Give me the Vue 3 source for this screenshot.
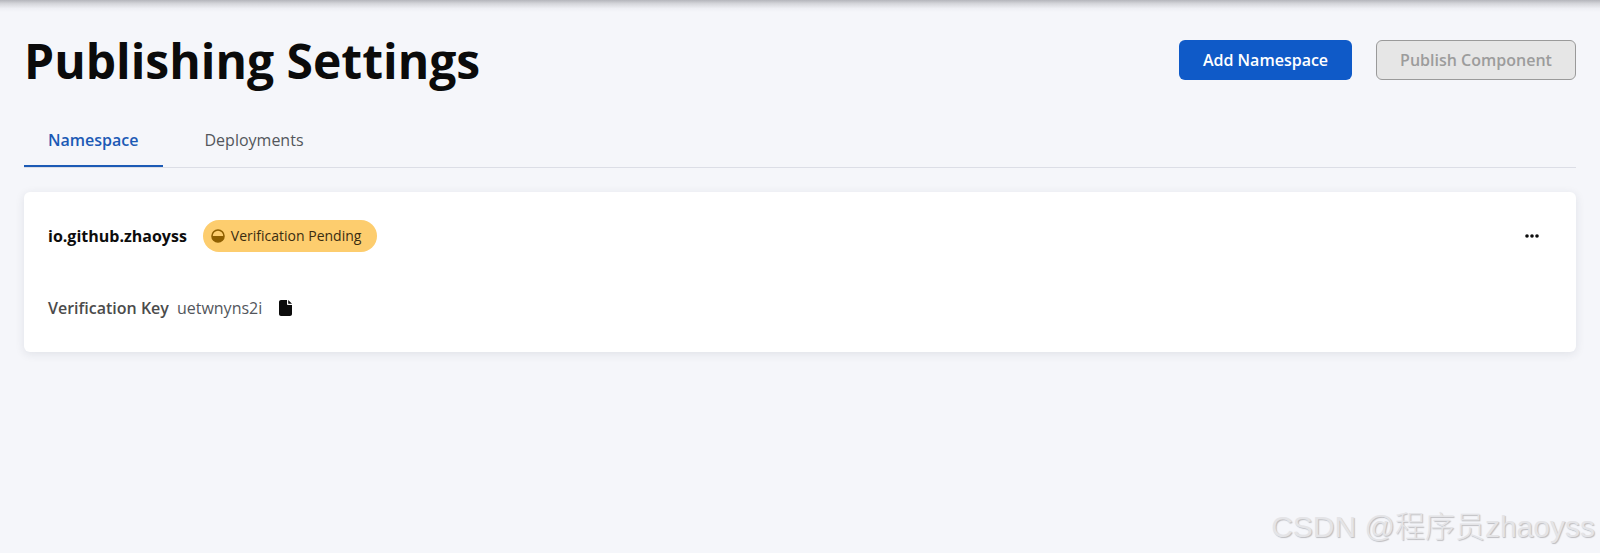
<script setup>
const tabs = [
  { label: 'Namespace', active: true },
  { label: 'Deployments', active: false },
]
</script>

<template>
  <div class="page">
    <div class="topshade"></div>
    <main class="content">
      <header class="head">
        <h1 class="title">Publishing Settings</h1>
        <div class="actions">
          <button class="btn primary">Add Namespace</button>
          <button class="btn disabled">Publish Component</button>
        </div>
      </header>
      <nav class="tabs">
        <div v-for="t in tabs" :key="t.label" class="tab" :class="{ active: t.active }">{{ t.label }}</div>
      </nav>
      <section class="card">
        <div class="row-top">
          <div class="row-left">
            <span class="name">io.github.zhaoyss</span>
            <span class="badge">
              <svg class="half" width="14" height="14" viewBox="0 0 14 14">
                <circle cx="7" cy="7" r="6" fill="none" stroke="#8f5f00" stroke-width="1.6" />
                <path d="M1 7h12a6 6 0 0 1-12 0z" fill="#8f5f00" />
              </svg>
              <span class="badge-text">Verification Pending</span>
            </span>
          </div>
          <svg class="more" width="14" height="4" viewBox="0 0 14 4">
            <circle cx="2" cy="2" r="1.8" fill="#0c0c0c" />
            <circle cx="7" cy="2" r="1.8" fill="#0c0c0c" />
            <circle cx="12" cy="2" r="1.8" fill="#0c0c0c" />
          </svg>
        </div>
        <div class="row-key">
          <span class="key-label">Verification Key</span>
          <span class="key-value">uetwnyns2i</span>
          <svg class="copy" width="13" height="16" viewBox="0 0 13 16">
            <path d="M2 0h6v4.2c0 .5.4.8.8.8H13v9c0 1.1-.9 2-2 2H2c-1.1 0-2-.9-2-2V2C0 .9.9 0 2 0zM9.2 0 13 3.8H9.2z" fill="#0c0c0c" />
          </svg>
        </div>
      </section>
    </main>
    <div class="watermark">CSDN @程序员zhaoyss</div>
  </div>
</template>

<style>
html, body { margin: 0; background: #f5f6fa; }
</style>

<style scoped>
.page {
  position: relative;
  height: 553px;
  overflow: hidden;
  background: #f5f6fa;
  font-family: "Open Sans", "Noto Sans", sans-serif;
}
.topshade {
  position: absolute;
  left: 0;
  right: 0;
  top: 0;
  height: 12px;
  background: linear-gradient(to bottom, #b4b5bb 0, #d4d5da 30%, #eeeff4 70%, #f5f6fa 100%);
}
.content {
  padding: 31px 24px 0;
}
.head {
  display: flex;
  justify-content: space-between;
  align-items: flex-start;
}
.title {
  margin: 0;
  font-size: 48px;
  line-height: 60px;
  font-weight: 700;
  color: #0b0b0b;
}
.actions {
  display: flex;
  gap: 24px;
  padding-top: 9px;
}
.btn {
  height: 40px;
  border-radius: 6px;
  font-family: inherit;
  font-size: 16px;
  font-weight: 600;
  box-sizing: border-box;
  padding: 0;
}
.primary {
  width: 173px;
  background: #0f5ac8;
  border: none;
  color: #fff;
}
.disabled {
  width: 200px;
  background: #e6e6e6;
  border: 1px solid #9a9a9a;
  color: #9c9c9c;
}
.tabs {
  display: flex;
  margin-top: 16px;
  border-bottom: 1px solid #dcdee6;
  height: 60px;
}
.tab {
  padding: 3px 24px 0;
  font-size: 16px;
  line-height: 60px;
  color: #53565c;
  height: 60px;
  box-sizing: border-box;
  margin-right: 18px;
}
.tab.active {
  color: #1c5ab5;
  font-weight: 600;
  border-bottom: 2px solid #1c5ab5;
}
.card {
  margin-top: 24px;
  height: 160px;
  box-sizing: border-box;
  background: #fff;
  border-radius: 6px;
  box-shadow: 0 2px 10px rgba(40, 45, 70, 0.1);
  padding: 28px 24px 0 24px;
}
.row-top {
  display: flex;
  align-items: center;
  justify-content: space-between;
  height: 32px;
  padding-right: 13px;
}
.row-left {
  display: flex;
  align-items: center;
  gap: 16px;
}
.name {
  font-size: 16px;
  font-weight: 700;
  color: #0d0d0d;
}
.badge {
  display: flex;
  align-items: center;
  gap: 6px;
  height: 32px;
  box-sizing: border-box;
  padding: 0 16px 0 8px;
  border-radius: 16px;
  background: #fdcd6e;
  color: #3a2c10;
  font-size: 14px;
}
.badge-text {
  margin-top: -2px;
}
.row-key {
  display: flex;
  align-items: center;
  margin-top: 44px;
  height: 24px;
  color: #53565c;
  font-size: 16px;
}
.key-label {
  font-weight: 600;
  color: #4b4b4b;
}
.key-value {
  margin-left: 8px;
}
.copy {
  margin-left: 17px;
}
.watermark {
  position: absolute;
  right: 5px;
  bottom: 8px;
  font-family: "Liberation Sans", "Noto Sans CJK SC", sans-serif;
  font-size: 30px;
  font-weight: 300;
  line-height: 36px;
  color: #e4e4e7;
  text-shadow: 1px 1px 1px #bdbdc0;
}
</style>
